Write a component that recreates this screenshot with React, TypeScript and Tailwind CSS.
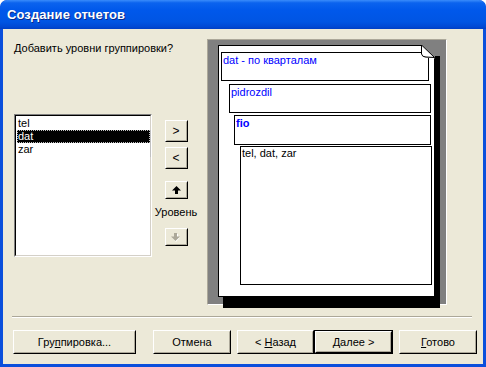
import React from "react";

const FONT = "font-['Liberation_Sans',Arial,sans-serif]";

function Btn({
  children,
  className = "",
  isDefault = false,
}: {
  children: React.ReactNode;
  className?: string;
  isDefault?: boolean;
}) {
  return (
    <div
      className={`${isDefault ? "border border-black" : ""} ${className} h-[24px] flex`}
    >
      <div className="flex-1 flex border border-t-white border-l-white border-r-black border-b-black">
        <div className="flex-1 flex items-center justify-center border border-t-[#ece9d8] border-l-[#ece9d8] border-r-[#aca899] border-b-[#aca899] bg-[#ece9d8] text-[11px] text-black">
          {children}
        </div>
      </div>
    </div>
  );
}

function SmallBtn({ children, h = 22 }: { children: React.ReactNode; h?: number }) {
  return (
    <div
      className={`w-[23px] ${h === 22 ? "h-[22px]" : "h-[18px]"} flex border border-t-white border-l-white border-r-black border-b-black`}
    >
      <div className="flex-1 flex items-center justify-center border border-t-[#ece9d8] border-l-[#ece9d8] border-r-[#aca899] border-b-[#aca899] bg-[#ece9d8] text-[12px] text-black">
        {children}
      </div>
    </div>
  );
}

function UpArrow() {
  return (
    <svg width="9" height="8" viewBox="0 0 9 8">
      <polygon points="4.5,0 9,4.5 6,4.5 6,8 3,8 3,4.5 0,4.5" fill="#000" />
    </svg>
  );
}

function DownArrow() {
  return (
    <svg width="10" height="9" viewBox="0 0 10 9">
      <polygon points="4,8 8,3.5 6,3.5 6,0 3,0 3,3.5 0,3.5" fill="#fff" transform="translate(1,1)" />
      <polygon points="4.5,8 9,3.5 6,3.5 6,0 3,0 3,3.5 0,3.5" fill="#aca899" />
    </svg>
  );
}

const LEVELS = ["tel", "dat", "zar"];

export default function App() {
  return (
    <div className={`${FONT} w-[486px] h-[367px] bg-[#0a4fdc] rounded-t-[7px] flex flex-col overflow-hidden`}>
      {/* title bar */}
      <div className="h-[29px] flex items-center px-[7px] bg-[linear-gradient(to_bottom,#3a8cfb_0%,#0b63ee_10%,#0058eb_35%,#0055e3_75%,#0049d4_92%,#003fc4_100%)] rounded-t-[7px]">
        <span className="text-white font-bold text-[13px] tracking-[0.1px] [text-shadow:1px_1px_0_#0a2a8a] pt-[1px]">
          Создание отчетов
        </span>
      </div>

      {/* body */}
      <div className="mx-[3px] mb-[3px] flex-1 bg-[#ece9d8] flex flex-col">
        <div className="flex pt-[10px] h-[287px]">
          {/* left column */}
          <div className="ml-[11px] w-[138px] flex flex-col">
            <div className="mt-[3px] text-[11px] leading-[13px] text-black whitespace-nowrap">
              Добавить уровни группировки?
            </div>
            <div className="mt-[59px] w-[138px] h-[143px] border border-t-[#808080] border-l-[#808080] border-r-white border-b-white">
              <div className="w-full h-full bg-white border border-t-black border-l-black border-r-[#d4d0c8] border-b-[#d4d0c8] pt-[1px] px-[1px] relative">
                {LEVELS.map((l) => (
                  <div
                    key={l}
                    className={`h-[13px] leading-[13px] text-[11px] pl-[1px] w-[133px] ${
                      l === "dat"
                        ? "bg-black text-white outline-1 outline-dotted outline-[#bfbfbf] -outline-offset-1"
                        : "text-black"
                    }`}
                  >
                    {l}
                  </div>
                ))}
                <div className="absolute left-[134px] top-[14px] w-[1px] h-[27px] bg-[#c0c0c0]" />
              </div>
            </div>
          </div>

          {/* move buttons */}
          <div className="ml-[2px] w-[44px] flex flex-col items-center pt-[81px]">
            <SmallBtn>&gt;</SmallBtn>
            <div className="mt-[5px]">
              <SmallBtn>&lt;</SmallBtn>
            </div>
            <div className="mt-[12px]">
              <SmallBtn h={18}>
                <UpArrow />
              </SmallBtn>
            </div>
            <div className="mt-[7px] text-[11px] leading-[13px] text-black">Уровень</div>
            <div className="mt-[9px]">
              <SmallBtn h={18}>
                <DownArrow />
              </SmallBtn>
            </div>
          </div>

          {/* preview */}
          <div className="ml-[9px] w-[240px] h-[266px] border border-t-[#aca899] border-l-[#aca899] border-r-white border-b-white">
            <div className="w-full h-full bg-[#808080] pl-[10px] pt-[5px]">
              <div className="relative w-[217px] h-[252px]">
                <div className="absolute left-[5px] top-[11px] w-[217px] h-[252px] bg-black" />
                <div className="relative w-full h-full bg-white border border-black flex flex-col">
                  <div className="ml-[2px] mt-[6px] w-[208px] h-[29px] border border-black text-[11px] leading-[13px] text-[#0000ff] pl-[1px] pt-[1px]">
                    dat - по кварталам
                  </div>
                  <div className="ml-[10px] mt-[3px] w-[202px] h-[29px] border border-black text-[11px] leading-[13px] text-[#0000ff] pl-[1px] pt-[1px]">
                    pidrozdil
                  </div>
                  <div className="ml-[15px] mt-[2px] w-[197px] h-[30px] border border-black text-[11px] leading-[13px] font-bold text-[#0000ff] pl-[1px] pt-[1px]">
                    fio
                  </div>
                  <div className="ml-[21px] mt-[1px] w-[192px] h-[139px] border border-black text-[11px] leading-[13px] text-black pl-[1px]">
                    tel, dat, zar
                  </div>
                </div>
                {/* folded corner */}
                <svg className="absolute right-0 top-0" width="14" height="14" viewBox="0 0 14 14">
                  <polygon points="0,0 14,0 14,14" fill="#808080" />
                  <polygon points="1,0.5 13.5,13 4,13 1,10" fill="#c0c0c0" />
                  <path d="M0.5,0 L0.5,9 Q1,12 5,12 L13.5,12.5 Z" fill="#ffffff" />
                  <path d="M0.5,0 L13.5,12.5" stroke="#000" strokeWidth="1" fill="none" />
                  <path d="M0.5,0 L0.5,9 Q1,12 5,12 L13.5,12.5" stroke="#000" strokeWidth="1" fill="none" />
                </svg>
              </div>
            </div>
          </div>
        </div>

        {/* separator */}
        <div className="mx-[9px] w-[460px] h-[2px] border-t border-t-[#aca899] border-b border-b-white" />

        {/* buttons */}
        <div className="flex mt-[12px] pl-[10px]">
          <Btn className="w-[123px]">
            <span>
              Гру<span className="underline underline-offset-1">п</span>пировка...
            </span>
          </Btn>
          <Btn className="w-[78px] ml-[17px]">Отмена</Btn>
          <Btn className="w-[77px] ml-[6px]">
            <span>
              &lt; <span className="underline underline-offset-1">Н</span>азад
            </span>
          </Btn>
          <Btn className="w-[79px]" isDefault>
            <span>
              <span className="underline underline-offset-1">Д</span>алее &gt;
            </span>
          </Btn>
          <Btn className="w-[78px] ml-[6px]">
            <span>
              <span className="underline underline-offset-1">Г</span>отово
            </span>
          </Btn>
        </div>
      </div>
    </div>
  );
}
